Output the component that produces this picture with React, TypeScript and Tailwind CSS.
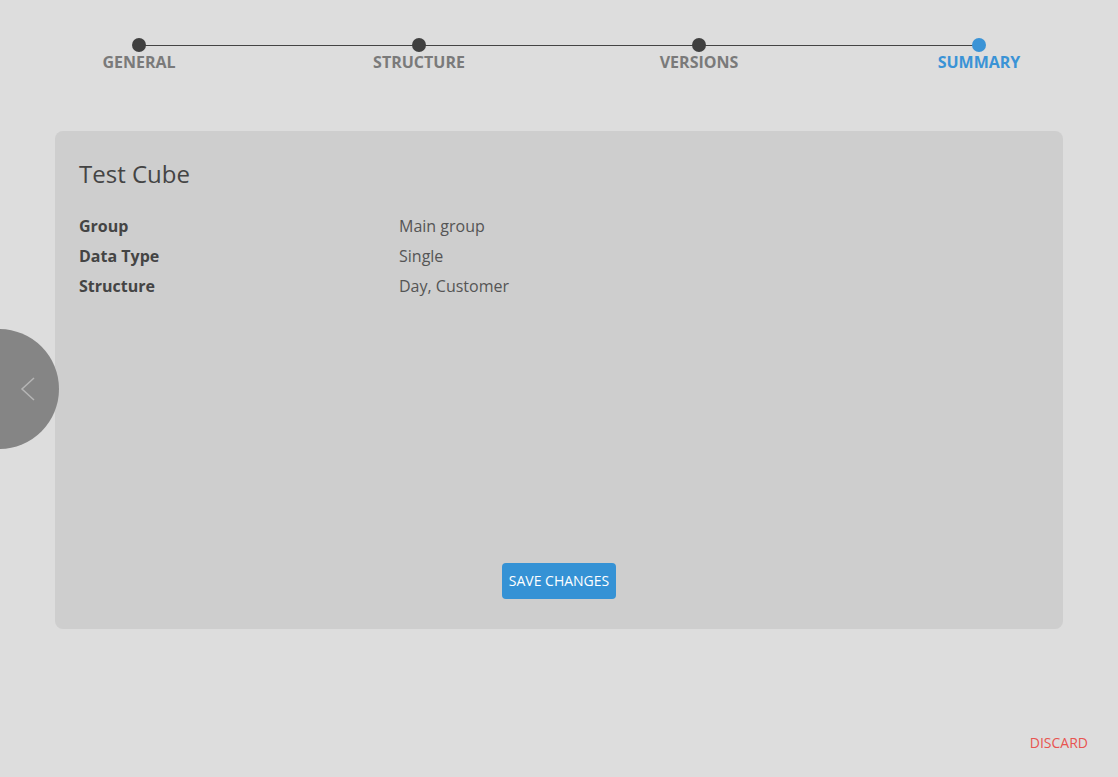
const steps = [
  { label: "GENERAL", active: false },
  { label: "STRUCTURE", active: false },
  { label: "VERSIONS", active: false },
  { label: "SUMMARY", active: true },
];

const rows = [
  ["Group", "Main group"],
  ["Data Type", "Single"],
  ["Structure", "Day, Customer"],
];

export default function App() {
  return (
    <div
      className="relative flex h-[777px] w-full flex-col overflow-hidden bg-[#dddddd]"
      style={{ fontFamily: '"Open Sans", "Liberation Sans", sans-serif' }}
    >
      {/* stepper */}
      <div className="relative mt-[38px] ml-[-1px] grid grid-cols-[repeat(4,280px)]">
        <div className="absolute top-[7px] left-[140px] h-px w-[840px] bg-[#444444]" />
        {steps.map((s) => (
          <div key={s.label} className="relative flex flex-col items-center">
            <div className={s.active ? "h-[14px] w-[14px] rounded-full bg-[#3a93d6]" : "h-[14px] w-[14px] rounded-full bg-[#404040]"} />
            <span
              className={
                s.active
                  ? "mt-[-1px] text-base leading-[22px] font-bold text-[#3a93d6]"
                  : "mt-[-1px] text-base leading-[22px] font-bold text-[#7a7a7a]"
              }
            >
              {s.label}
            </span>
          </div>
        ))}
      </div>

      {/* card */}
      <div className="mt-[58px] mr-[55px] ml-[55px] flex h-[498px] flex-col rounded-lg bg-[#cecece] px-6 pt-[27px] pb-[30px]">
        <h1 className="text-2xl leading-8 font-normal text-[#444444]">Test Cube</h1>
        <div className="mt-[21px] flex flex-col">
          {rows.map(([k, v]) => (
            <div key={k} className="flex text-base leading-[30px]">
              <span className="w-[320px] font-bold text-[#444444]">{k}</span>
              <span className="text-[#555555]">{v}</span>
            </div>
          ))}
        </div>
        <div className="flex-1" />
        <div className="flex justify-center">
          <button className="h-9 rounded-sm bg-[#3592d5] px-[7px] text-sm text-white">SAVE CHANGES</button>
        </div>
      </div>

      {/* discard */}
      <div className="mt-auto mb-[24px] flex justify-end pr-[30px]">
        <button className="text-sm text-[#e85450]">DISCARD</button>
      </div>

      {/* back button */}
      <button className="absolute top-[329px] left-[-61px] flex h-[120px] w-[120px] items-center justify-end rounded-full bg-[#858585]">
        <svg width="60" height="120" viewBox="0 0 60 120" className="shrink-0">
          <path d="M 35 49 L 23 60 L 35 71" fill="none" stroke="#b5b5b5" strokeWidth="1.5" />
        </svg>
      </button>
    </div>
  );
}
